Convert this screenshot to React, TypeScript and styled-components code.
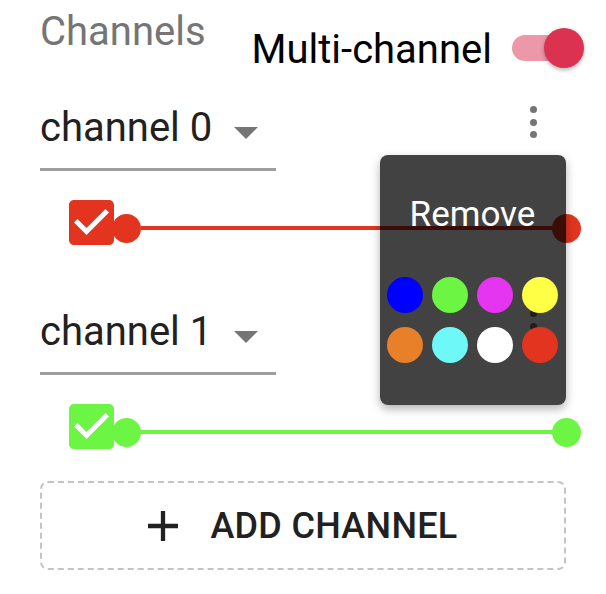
import React from "react";
import styled, { createGlobalStyle } from "styled-components";

const GlobalStyle = createGlobalStyle`
  body {
    margin: 0;
    background: #ffffff;
    font-family: Roboto, "Liberation Sans", sans-serif;
  }
`;

const Page = styled.div`
  position: relative;
  width: 606px;
  height: 594px;
  padding: 0 40px;
  box-sizing: border-box;
  overflow: hidden;
`;

const Header = styled.div`
  height: 102px;
  box-sizing: border-box;
  padding-top: 8px;
  margin-right: -18px;
  display: flex;
  justify-content: space-between;
  align-items: flex-start;
`;

const Title = styled.div`
  font-size: 40px;
  line-height: 48px;
  color: #757575;
`;

const ToggleGroup = styled.label`
  margin-top: 18px;
  display: flex;
  align-items: center;
  gap: 20px;
`;

const ToggleLabel = styled.span`
  font-size: 40px;
  line-height: 48px;
  color: #000000;
`;

const SwitchBox = styled.span`
  position: relative;
  width: 72px;
  height: 40px;
  display: flex;
  align-items: center;
  margin-bottom: 4px;
`;

const SwitchTrack = styled.span`
  width: 60px;
  height: 26px;
  border-radius: 13px;
  background: #dc3252;
  opacity: 0.5;
`;

const SwitchThumb = styled.span`
  position: absolute;
  top: 0;
  right: 0;
  width: 40px;
  height: 40px;
  border-radius: 50%;
  background: #dc3252;
  box-shadow: 0 2px 4px rgba(0, 0, 0, 0.3);
`;

const ChannelList = styled.div`
  display: flex;
  flex-direction: column;
  gap: 48px;
`;

const ChannelBlock = styled.div`
  display: flex;
  flex-direction: column;
`;

const SelectRow = styled.div`
  display: flex;
  justify-content: space-between;
  align-items: flex-start;
`;

const Select = styled.div`
  width: 236px;
  display: flex;
  align-items: center;
  padding-top: 2px;
  padding-bottom: 16px;
  border-bottom: 3px solid #9e9e9e;
`;

const SelectValue = styled.span`
  font-size: 40px;
  line-height: 48px;
  color: #212121;
`;

const Arrow = styled.svg`
  width: 24px;
  height: 12px;
  margin: 10px 18px 0 auto;
  fill: #757575;
`;

const KebabButton = styled.button`
  width: 48px;
  height: 48px;
  margin: -4px 9px 0 0;
  padding: 0;
  border: none;
  background: none;
  display: flex;
  flex-direction: column;
  align-items: center;
  justify-content: center;
  gap: 5.5px;
`;

const Dot = styled.span`
  width: 7px;
  height: 7px;
  border-radius: 50%;
  background: #757575;
`;

const SliderRow = styled.div`
  margin-top: 27px;
  margin-right: -15px;
  height: 60px;
  display: flex;
  align-items: center;
`;

const CheckIcon = styled.svg<{ $color: string }>`
  flex: none;
  align-self: flex-start;
  width: 45px;
  height: 45px;
  margin: 2px 0 0 29px;
  fill: ${(p) => p.$color};
`;

const Slider = styled.div`
  flex: 1;
  margin-left: -2px;
  display: flex;
  align-items: center;
`;

const Thumb = styled.span<{ $color: string }>`
  flex: none;
  width: 29px;
  height: 29px;
  border-radius: 50%;
  background: ${(p) => p.$color};
`;

const Track = styled.span<{ $color: string }>`
  flex: 1;
  height: 4px;
  background: ${(p) => p.$color};
`;

const Menu = styled.div`
  position: absolute;
  left: 380px;
  top: 155px;
  width: 186px;
  height: 250px;
  box-sizing: border-box;
  padding: 36px 8px 0 7px;
  border-radius: 8px;
  background: rgba(0, 0, 0, 0.74);
  box-shadow: 0 4px 10px rgba(0, 0, 0, 0.3);
`;

const MenuItem = styled.div`
  font-size: 35px;
  line-height: 48px;
  color: #ffffff;
  text-align: center;
`;

const Swatches = styled.div`
  margin-top: 38px;
  display: grid;
  grid-template-columns: repeat(4, 36px);
  column-gap: 9px;
  row-gap: 14px;
`;

const Swatch = styled.span<{ $color: string }>`
  width: 36px;
  height: 36px;
  border-radius: 50%;
  background: ${(p) => p.$color};
`;

const AddButton = styled.button`
  margin-top: 19px;
  width: 100%;
  height: 89px;
  display: flex;
  align-items: center;
  justify-content: center;
  gap: 32px;
  border: 2px dashed #c4c4c4;
  border-radius: 8px;
  background: none;
  font-family: Roboto, "Liberation Sans", sans-serif;
  font-weight: 500;
  font-size: 36px;
  letter-spacing: 0.3px;
  color: #212121;
`;

const PlusIcon = styled.svg`
  width: 30px;
  height: 30px;
  fill: #212121;
`;

const channels = [
  { name: "channel 0", color: "#e3341f" },
  { name: "channel 1", color: "#6cf543" },
];

const swatchColors = [
  "#0000ff",
  "#6cf543",
  "#e535f0",
  "#ffff45",
  "#e8802a",
  "#6ef8f8",
  "#ffffff",
  "#e3341f",
];

const App: React.FC = () => (
  <Page>
    <GlobalStyle />
    <Header>
      <Title>Channels</Title>
      <ToggleGroup>
        <ToggleLabel>Multi-channel</ToggleLabel>
        <SwitchBox>
          <SwitchTrack />
          <SwitchThumb />
        </SwitchBox>
      </ToggleGroup>
    </Header>
    <ChannelList>
      {channels.map((ch) => (
        <ChannelBlock key={ch.name}>
          <SelectRow>
            <Select>
              <SelectValue>{ch.name}</SelectValue>
              <Arrow viewBox="7 10 10 5">
                <path d="M7 10l5 5 5-5z" />
              </Arrow>
            </Select>
            <KebabButton>
              <Dot />
              <Dot />
              <Dot />
            </KebabButton>
          </SelectRow>
          <SliderRow>
            <CheckIcon $color={ch.color} viewBox="3 3 18 18">
              <path d="M19 3H5c-1.11 0-2 .9-2 2v14c0 1.1.89 2 2 2h14c1.11 0 2-.9 2-2V5c0-1.1-.89-2-2-2zm-9 14l-5-5 1.41-1.41L10 14.17l7.59-7.59L19 8l-9 9z" />
            </CheckIcon>
            <Slider>
              <Thumb $color={ch.color} />
              <Track $color={ch.color} />
              <Thumb $color={ch.color} />
            </Slider>
          </SliderRow>
        </ChannelBlock>
      ))}
    </ChannelList>
    <AddButton>
      <PlusIcon viewBox="5 5 14 14">
        <path d="M19 13h-6v6h-2v-6H5v-2h6V5h2v6h6v2z" />
      </PlusIcon>
      ADD CHANNEL
    </AddButton>
    <Menu>
      <MenuItem>Remove</MenuItem>
      <Swatches>
        {swatchColors.map((c) => (
          <Swatch key={c + "-sw"} $color={c} />
        ))}
      </Swatches>
    </Menu>
  </Page>
);

export default App;
